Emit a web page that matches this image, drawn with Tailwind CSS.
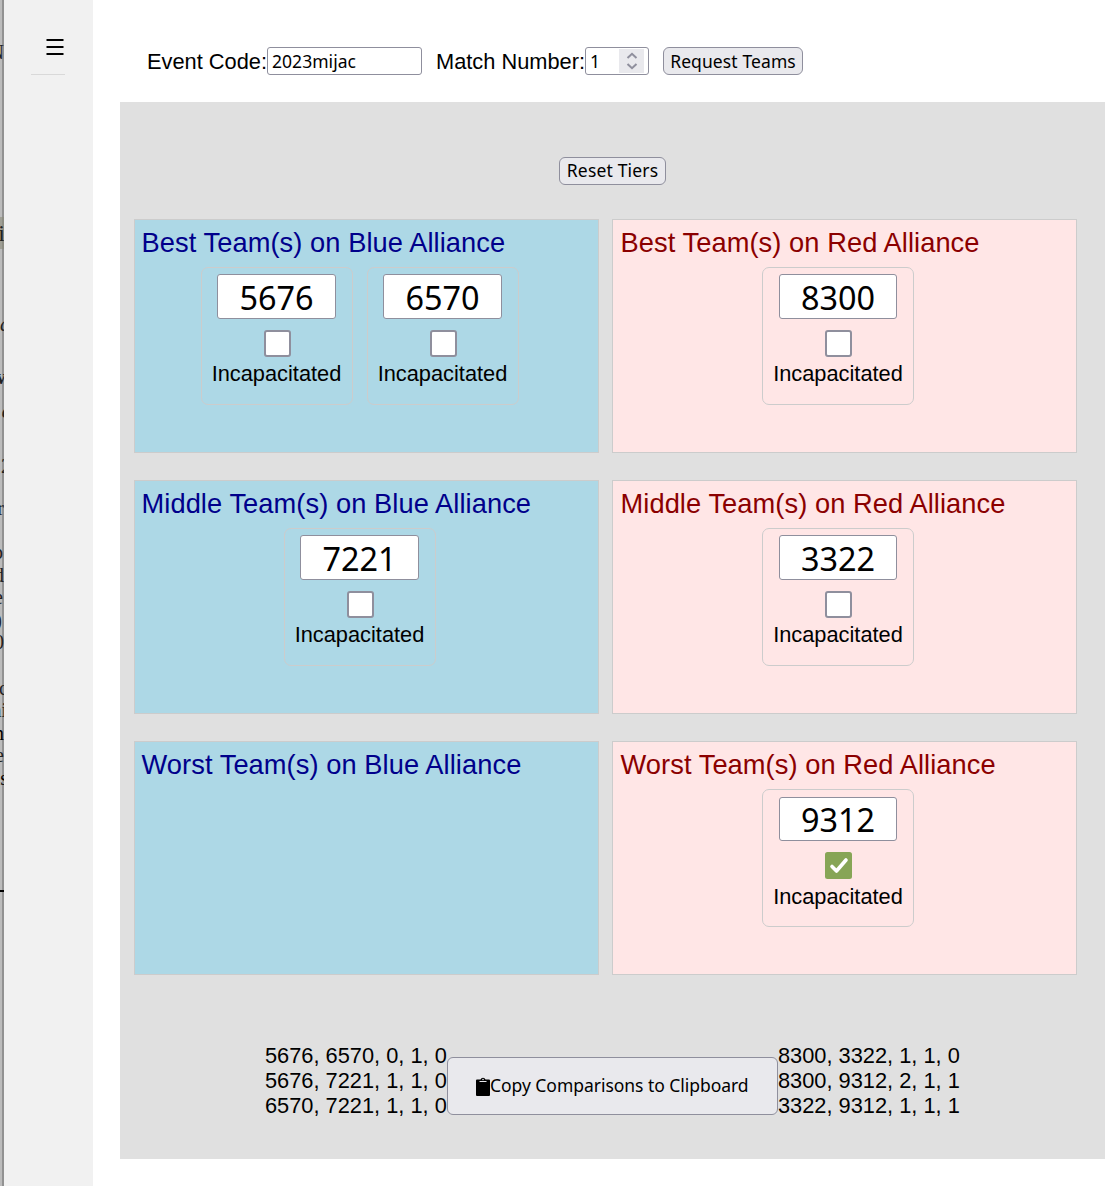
<!DOCTYPE html>
<html lang="en">
<head>
<meta charset="utf-8">
<title>Match Tiers</title>
<script src="https://cdn.jsdelivr.net/npm/@tailwindcss/browser@4"></script>
</head>
<body class="flex h-[1186px] w-[1120px] overflow-hidden bg-white font-['Liberation_Sans',Arial,sans-serif] text-[21.8px] leading-[25px] text-black">

<!-- sliver of the window behind -->
<div class="relative h-full w-1 shrink-0 overflow-hidden bg-[#bcbcbc] font-['Liberation_Serif',serif] text-[20px] leading-5 text-[#222]">
  <div class="absolute top-0 left-[2px] h-full w-[2px] bg-[#929292]"></div>
  <div class="absolute top-[217px] left-0 h-8 w-1 bg-[#8c8c7c]/60"></div>
  <span class="absolute top-[42px] right-0">N</span>
  <span class="absolute top-[223px] right-[-1px] text-[24px]">i</span>
  <span class="absolute top-[314px] left-0 italic">a</span>
  <span class="absolute top-[367px] right-[-2px] font-bold">v</span>
  <span class="absolute top-[401px] left-[2px] font-bold italic">c</span>
  <span class="absolute top-[456px] left-[1px]">2</span>
  <span class="absolute top-[498px] right-0">r</span>
  <span class="absolute top-[542px] right-[1px]">p</span>
  <span class="absolute top-[565px] right-0">d</span>
  <span class="absolute top-[587px] right-[1px]">e</span>
  <span class="absolute top-[610px] right-[2px]">)</span>
  <span class="absolute top-[632px] right-0">0</span>
  <span class="absolute top-[678px] left-[-1px]">c</span>
  <span class="absolute top-[700px] right-[-3px]">ni</span>
  <span class="absolute top-[723px] right-0 text-black">n</span>
  <span class="absolute top-[745px] right-0">e</span>
  <span class="absolute top-[768px] right-[-4px] text-black">as</span>
  <div class="absolute top-[890px] left-0 h-[2px] w-1 bg-black"></div>
</div>

<nav class="flex w-[89px] shrink-0 flex-col bg-[#f1f1f1] pt-[39px] pl-[27px]">
  <svg class="ml-[15px] h-4 w-[18px]" viewBox="0 0 18 16"><path d="M.5 1h17M.5 8h17M.5 15h17" stroke="#000" stroke-width="2"/></svg>
  <div class="mt-[19px] h-px w-[34px] bg-[#d9d9d9]"></div>
</nav>

<main class="flex w-[1012px] shrink-0 flex-col pl-[27px]">
  <div class="flex h-[102px] shrink-0 items-start pt-[47px] pl-[27px]">
    <label class="w-[120px] pt-[2px] whitespace-nowrap">Event Code:</label>
    <div class="flex h-7 w-[155px] items-center rounded-[3px] border border-[#8f8f9d] bg-white pl-[4px] font-['Noto_Sans',sans-serif] text-[17.5px] tracking-[0.04px]">2023mijac</div>
    <label class="ml-[14px] w-[149px] pt-[2px] whitespace-nowrap">Match Number:</label>
    <div class="flex h-7 w-16 items-center justify-between rounded-[3px] border border-[#8f8f9d] bg-white pr-[4px] pl-[4px] font-['Noto_Sans',sans-serif] text-[17.5px]">1
      <div class="flex h-6 w-[25px] items-center justify-center bg-[#e9e9ed]">
        <svg class="h-[18px] w-3" viewBox="0 0 12 18" fill="none" stroke="#8f8f9d" stroke-width="2"><path d="M1.500 6 6 1.800 10.500 6M1.500 12 6 16.200 10.500 12"/></svg>
      </div>
    </div>
    <button class="ml-[14px] h-7 w-[140px] rounded-[6px] border border-[#8f8f9d] bg-[#e9e9ed] font-['Noto_Sans',sans-serif] text-[17.5px] leading-6 tracking-[0.1px] whitespace-nowrap">Request Teams</button>
  </div>

  <section class="flex h-[1057px] w-[985px] shrink-0 flex-col items-center bg-[#e0e0e0] pt-[55px]">
    <button class="h-7 w-[107px] rounded-[6px] border border-[#8f8f9d] bg-[#e9e9ed] pb-[2px] font-['Noto_Sans',sans-serif] text-[17.5px] leading-6 tracking-[0.16px] whitespace-nowrap">Reset Tiers</button>

    <div id="tiers" class="mt-[34px] mr-[14px] grid grid-cols-[465px_465px] grid-rows-[234px_234px_234px] gap-x-[13px] gap-y-[27px]"></div>

    <div class="mt-[68px] flex items-start">
      <div class="w-[182px] whitespace-nowrap">5676, 6570, 0, 1, 0<br>5676, 7221, 1, 1, 0<br>6570, 7221, 1, 1, 0</div>
      <button class="mt-[14px] flex h-[58px] w-[331px] items-center rounded-[6px] border border-[#8f8f9d] bg-[#e9e9ed] pl-7 font-['Noto_Sans',sans-serif] text-[17.5px] tracking-[-0.04px] whitespace-nowrap">
        <svg class="h-[19px] w-[14px] shrink-0" viewBox="0 0 14 19"><path d="M1 2.500h3.500a2.700 2.700 0 0 1 5 0H13a1 1 0 0 1 1 1V18a1 1 0 0 1-1 1H1a1 1 0 0 1-1-1V3.500a1 1 0 0 1 1-1z"/><path d="M3.500 4.500h7" stroke="#e9e9ed"/><circle cx="7" cy="2.500" r=".8" fill="#e9e9ed"/></svg>
        <span class="pb-px">Copy Comparisons to Clipboard</span>
      </button>
      <div class="w-[182px] whitespace-nowrap">8300, 3322, 1, 1, 0<br>8300, 9312, 2, 1, 1<br>3322, 9312, 1, 1, 1</div>
    </div>
  </section>
</main>

<script>
const tiers = [
  ['Best', 'Blue', ['5676', '6570']], ['Best', 'Red', ['8300']],
  ['Middle', 'Blue', ['7221']], ['Middle', 'Red', ['3322']],
  ['Worst', 'Blue', []], ['Worst', 'Red', ['9312']],
];
const incapacitated = ['9312'];
const card = (team, side, last) => `
  <div class="mr-[14px] flex h-[138px] w-[152px] flex-col items-center rounded-[7px] border border-[#ccc] ${last ? 'pt-[7px]' : 'pt-[6px]'} ${side === 'Red' ? 'pl-px' : ''}">
    <div class="${last ? 'h-[44px]' : 'h-[45px]'} ${side === 'Red' ? 'w-[118px]' : 'w-[119px]'} flex shrink-0 items-center justify-center rounded-[3px] border border-[#8f8f9d] bg-white pt-px font-['Noto_Sans',sans-serif] text-[32.4px]">${team}</div>
    ${incapacitated.includes(team)
      ? `<svg class="mt-[11px] ml-px h-[27px] w-[27px] shrink-0" viewBox="0 0 27 27"><rect width="27" height="27" rx="2.500" fill="#87a556"/><path d="M7 14.500 11.500 19 21 8" fill="none" stroke="#fff" stroke-width="3.600" stroke-linecap="round" stroke-linejoin="round"/></svg>`
      : `<div class="mt-[11px] ml-px h-[27px] w-[27px] shrink-0 rounded-[3px] border-2 border-[#8f8f9d] bg-white"></div>`}
    <span class="${last ? 'mt-[5px]' : 'mt-[4px]'}">Incapacitated</span>
  </div>`;
document.getElementById('tiers').innerHTML = tiers.map(([rank, side, teams]) => `
  <div class="border border-[#ccc] ${side === 'Blue' ? 'bg-[#add8e6]' : 'bg-[#ffe6e6]'}">
    <h2 class="${side === 'Blue' ? 'text-[#00008b] pl-[6.5px]' : 'text-[#8b0000] pl-[7.5px]'} h-[47px] pt-[7px] text-[27.25px] leading-[31px] tracking-[0.075px] whitespace-nowrap">${rank} Team(s) on ${side} Alliance</h2>
    <div class="flex justify-center">${teams.map(t => card(t, side, rank === 'Worst')).join('')}</div>
  </div>`).join('');
</script>
</body>
</html>
